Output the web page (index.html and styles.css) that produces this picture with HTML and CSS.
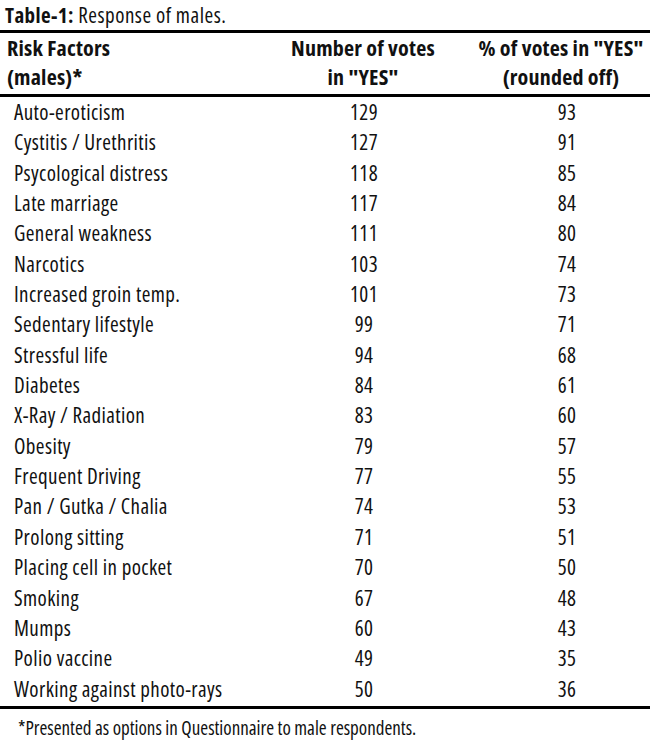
FILE: index.html
```html
<!DOCTYPE html>
<html lang="en">
<head>
<meta charset="utf-8">
<title>Table-1: Response of males.</title>
<link rel="stylesheet" href="styles.css">
</head>
<body>
<div class="page">
  <p class="caption"><b>Table-1:</b> Response of males.</p>
  <table class="data">
    <colgroup><col class="w1"><col class="w2"><col class="w3"></colgroup>
    <thead>
      <tr>
        <th class="c1">Risk Factors<br>(males)*</th>
        <th class="c2">Number of votes<br>in "YES"</th>
        <th class="c3">% of votes in "YES"<br>(rounded off)</th>
      </tr>
    </thead>
    <tbody>
      <tr><td class="c1">Auto-eroticism</td><td class="c2">129</td><td class="c3">93</td></tr>
      <tr><td class="c1">Cystitis / Urethritis</td><td class="c2">127</td><td class="c3">91</td></tr>
      <tr><td class="c1">Psycological distress</td><td class="c2">118</td><td class="c3">85</td></tr>
      <tr><td class="c1">Late marriage</td><td class="c2">117</td><td class="c3">84</td></tr>
      <tr><td class="c1">General weakness</td><td class="c2">111</td><td class="c3">80</td></tr>
      <tr><td class="c1">Narcotics</td><td class="c2">103</td><td class="c3">74</td></tr>
      <tr><td class="c1">Increased groin temp.</td><td class="c2">101</td><td class="c3">73</td></tr>
      <tr><td class="c1">Sedentary lifestyle</td><td class="c2">99</td><td class="c3">71</td></tr>
      <tr><td class="c1">Stressful life</td><td class="c2">94</td><td class="c3">68</td></tr>
      <tr><td class="c1">Diabetes</td><td class="c2">84</td><td class="c3">61</td></tr>
      <tr><td class="c1">X-Ray / Radiation</td><td class="c2">83</td><td class="c3">60</td></tr>
      <tr><td class="c1">Obesity</td><td class="c2">79</td><td class="c3">57</td></tr>
      <tr><td class="c1">Frequent Driving</td><td class="c2">77</td><td class="c3">55</td></tr>
      <tr><td class="c1">Pan / Gutka / Chalia</td><td class="c2">74</td><td class="c3">53</td></tr>
      <tr><td class="c1">Prolong sitting</td><td class="c2">71</td><td class="c3">51</td></tr>
      <tr><td class="c1">Placing cell in pocket</td><td class="c2">70</td><td class="c3">50</td></tr>
      <tr><td class="c1">Smoking</td><td class="c2">67</td><td class="c3">48</td></tr>
      <tr><td class="c1">Mumps</td><td class="c2">60</td><td class="c3">43</td></tr>
      <tr><td class="c1">Polio vaccine</td><td class="c2">49</td><td class="c3">35</td></tr>
      <tr class="last"><td class="c1">Working against photo-rays</td><td class="c2">50</td><td class="c3">36</td></tr>
    </tbody>
  </table>
  <p class="note">*Presented as options in Questionnaire to male respondents.</p>
</div>
</body>
</html>
```
FILE: styles.css
```css
html, body {
  margin: 0;
  padding: 0;
  background: #ffffff;
}

body {
  font-family: "Open Sans", "Liberation Sans", sans-serif;
  font-stretch: 75%;
  color: #111111;
}

.page {
  width: 650px;
}

.caption {
  margin: 0;
  padding-left: 5px;
  font-size: 21px;
  letter-spacing: 0.5px;
  line-height: 30px;
  white-space: nowrap;
}

.caption b {
  font-weight: 700;
  font-size: 21px;
  letter-spacing: 0.4px;
}

.data {
  width: 650px;
  border-collapse: separate;
  border-spacing: 0;
  table-layout: fixed;
}

.w1 { width: 272px; }
.w2 { width: 182px; }
.w3 { width: 196px; }

.data th {
  font-weight: 700;
  font-size: 22px;
  letter-spacing: 0.2px;
  line-height: 29px;
  padding: 0 0 3px;
  border-top: 3px solid #000;
  border-bottom: 3px solid #000;
  vertical-align: top;
  white-space: nowrap;
}

.data th.c1 {
  text-align: left;
  padding-left: 7px;
}

.data th.c2 {
  text-align: center;
}

.data th.c3 {
  text-align: center;
  padding-left: 18px;
}

.data td {
  font-size: 21px;
  letter-spacing: 0.4px;
  line-height: 30.35px;
  height: 30.35px;
  padding: 0;
  white-space: nowrap;
}

.data td.c1 {
  text-align: left;
  padding-left: 14px;
}

.data td.c2 {
  text-align: center;
  padding-left: 2px;
}

.data td.c3 {
  text-align: center;
  padding-left: 30px;
}

.data tr.last td {
  padding-bottom: 2px;
  border-bottom: 3px solid #000;
}

.note {
  margin: 0;
  padding: 6px 0 0 18px;
  font-size: 19px;
  line-height: 26px;
  white-space: nowrap;
}
```
